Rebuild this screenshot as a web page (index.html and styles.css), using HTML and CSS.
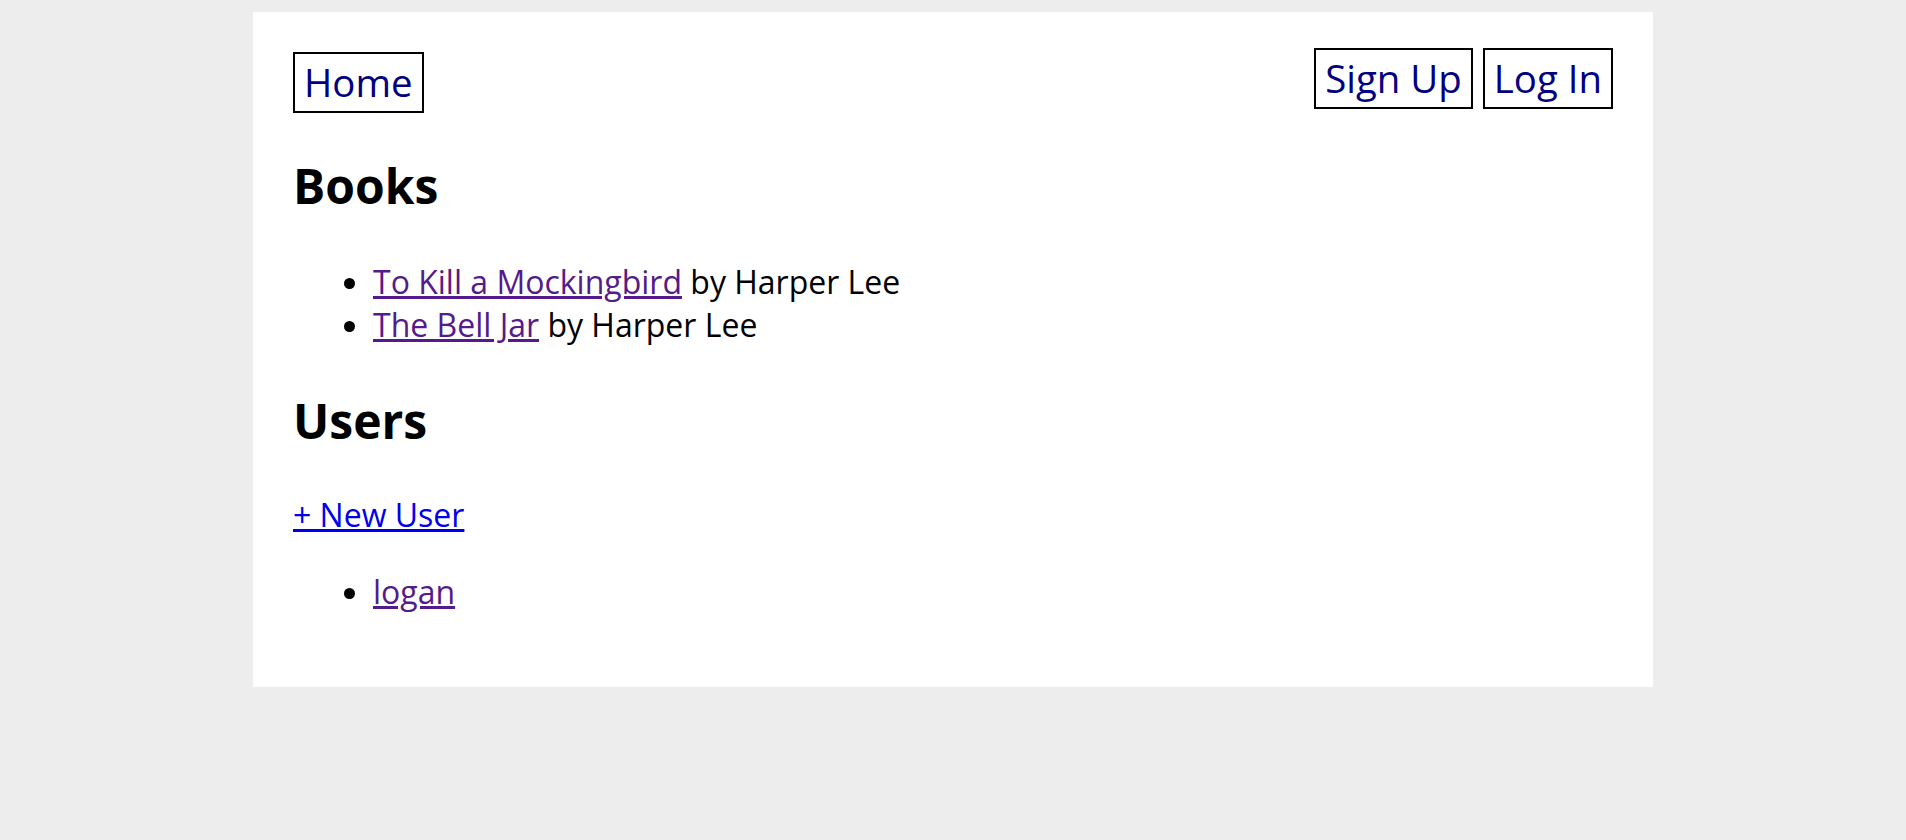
FILE: index.html
```html
<!DOCTYPE html>
<html lang="en">
<head>
<meta charset="utf-8">
<title>Books</title>
<link rel="stylesheet" href="styles.css">
</head>
<body>
<div class="page">
  <nav class="nav">
    <a class="nav-link nav-home" href="#">Home</a>
    <div class="nav-right">
      <a class="nav-link" href="#">Sign Up</a>
      <a class="nav-link" href="#">Log In</a>
    </div>
  </nav>
  <h1 class="heading">Books</h1>
  <ul class="list list-books">
    <li><a class="visited" href="#">To Kill a Mockingbird</a> by Harper Lee</li>
    <li><a class="visited" href="#">The Bell Jar</a> by Harper Lee</li>
  </ul>
  <h1 class="heading">Users</h1>
  <p class="para"><a class="link" href="#">+ New User</a></p>
  <ul class="list">
    <li><a class="visited" href="#">logan</a></li>
  </ul>
</div>
</body>
</html>
```
FILE: styles.css
```css
html, body {
  margin: 0;
  padding: 0;
}
body {
  background: #ededed;
  font-family: "Open Sans", "Noto Sans", sans-serif;
  font-size: 32px;
  color: #000;
}
.page {
  width: 1400px;
  margin: 12px auto 0;
  background: #fff;
  padding: 36px 40px 40px;
  box-sizing: border-box;
}
.nav {
  display: flex;
  justify-content: space-between;
  align-items: flex-start;
}
.nav-right {
  display: flex;
  gap: 10px;
}
.nav-link {
  display: block;
  font-size: 38.4px;
  line-height: 51px;
  padding: 3px 9px;
  border: 2px solid #000;
  color: #000080;
  text-decoration: none;
}
.nav-home {
  margin-top: 4px;
}
.heading {
  font-size: 48px;
  font-weight: 700;
  margin: 40px 0;
  line-height: normal;
}
.list {
  margin: 34px 0;
  padding-left: 80px;
}
.list-books {
  margin: 42px 0;
}
.para {
  margin: 32px 0;
}
.visited {
  color: #551a8b;
}
.link {
  color: #0000ee;
}
```
